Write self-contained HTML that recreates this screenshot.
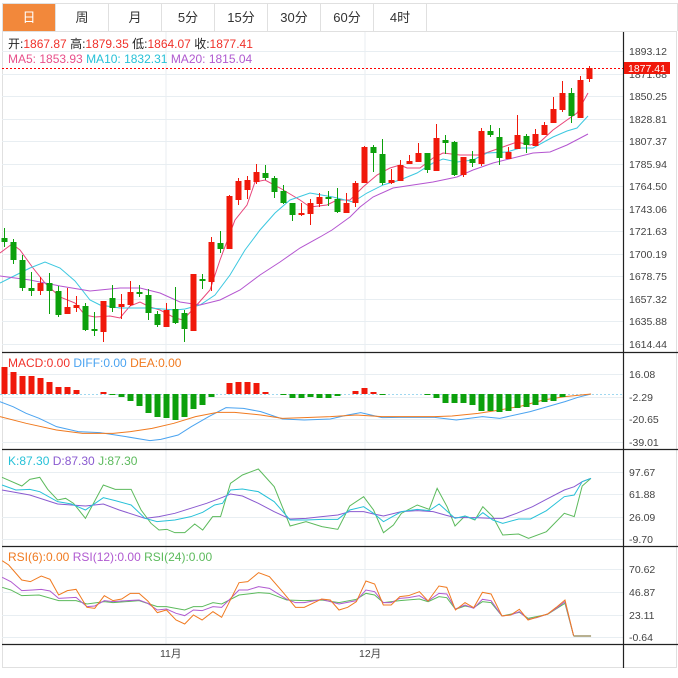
<!DOCTYPE html>
<html><head><meta charset="utf-8"><style>
html,body{margin:0;padding:0;background:#fff;width:678px;height:678px;overflow:hidden}
body{font-family:"Liberation Sans","Noto Sans CJK SC",sans-serif}
.tabs{position:absolute;left:2px;top:3px;height:27px;width:674px;border:1px solid #e0e0e0;border-bottom:none;display:flex}
.tab{width:52px;border-right:1px solid #e0e0e0;text-align:center;line-height:27px;font-size:13px;color:#333}
.tab.on{background:#f2883b;color:#fff}
svg{position:absolute;left:0;top:0}
</style></head><body>
<div class="tabs"><div class="tab on">日</div><div class="tab">周</div><div class="tab">月</div><div class="tab">5分</div><div class="tab">15分</div><div class="tab">30分</div><div class="tab">60分</div><div class="tab">4时</div></div>
<svg width="678" height="678" viewBox="0 0 678 678" font-family="Liberation Sans, Noto Sans CJK SC, sans-serif">
<rect x="2.5" y="31.5" width="674" height="636" fill="none" stroke="#e0e0e0"/>
<g stroke="#e8eef2" stroke-width="1">
<line x1="166" y1="32" x2="166" y2="644"/><line x1="365" y1="32" x2="365" y2="644"/>
<line x1="2" y1="51.5" x2="623" y2="51.5"/><line x1="2" y1="74.5" x2="623" y2="74.5"/><line x1="2" y1="96.5" x2="623" y2="96.5"/><line x1="2" y1="119.5" x2="623" y2="119.5"/><line x1="2" y1="141.5" x2="623" y2="141.5"/><line x1="2" y1="164.5" x2="623" y2="164.5"/><line x1="2" y1="186.5" x2="623" y2="186.5"/><line x1="2" y1="209.5" x2="623" y2="209.5"/><line x1="2" y1="231.5" x2="623" y2="231.5"/><line x1="2" y1="254.5" x2="623" y2="254.5"/><line x1="2" y1="276.5" x2="623" y2="276.5"/><line x1="2" y1="299.5" x2="623" y2="299.5"/><line x1="2" y1="321.5" x2="623" y2="321.5"/><line x1="2" y1="344.5" x2="623" y2="344.5"/>
<line x1="2" y1="374.5" x2="623" y2="374.5"/><line x1="2" y1="397.5" x2="623" y2="397.5"/><line x1="2" y1="419.5" x2="623" y2="419.5"/><line x1="2" y1="442.5" x2="623" y2="442.5"/>
<line x1="2" y1="472.5" x2="623" y2="472.5"/><line x1="2" y1="494.5" x2="623" y2="494.5"/><line x1="2" y1="517.5" x2="623" y2="517.5"/><line x1="2" y1="539.5" x2="623" y2="539.5"/>
<line x1="2" y1="569.5" x2="623" y2="569.5"/><line x1="2" y1="592.5" x2="623" y2="592.5"/><line x1="2" y1="615.5" x2="623" y2="615.5"/><line x1="2" y1="637.5" x2="623" y2="637.5"/>
</g>
<g stroke="#222" stroke-width="1.2">
<line x1="623.5" y1="32" x2="623.5" y2="668"/>
<line x1="2" y1="352.5" x2="678" y2="352.5"/><line x1="2" y1="449.5" x2="678" y2="449.5"/><line x1="2" y1="546.5" x2="678" y2="546.5"/><line x1="2" y1="644.5" x2="678" y2="644.5"/>
</g>
<g font-size="10.5" fill="#444">
<text x="629" y="55">1893.12</text><text x="629" y="78">1871.68</text><text x="629" y="100">1850.25</text><text x="629" y="123">1828.81</text><text x="629" y="145">1807.37</text><text x="629" y="168">1785.94</text><text x="629" y="190">1764.50</text><text x="629" y="213">1743.06</text><text x="629" y="235">1721.63</text><text x="629" y="258">1700.19</text><text x="629" y="280">1678.75</text><text x="629" y="303">1657.32</text><text x="629" y="325">1635.88</text><text x="629" y="348">1614.44</text>
<text x="629" y="378">16.08</text><text x="629" y="401">-2.29</text><text x="629" y="423">-20.65</text><text x="629" y="446">-39.01</text>
<text x="629" y="476">97.67</text><text x="629" y="498">61.88</text><text x="629" y="521">26.09</text><text x="629" y="543">-9.70</text>
<text x="629" y="573">70.62</text><text x="629" y="596">46.87</text><text x="629" y="619">23.11</text><text x="629" y="641">-0.64</text>
<text x="160" y="657">11月</text><text x="359" y="657">12月</text>
</g>
<line x1="2" y1="68.5" x2="623" y2="68.5" stroke="#f00" stroke-dasharray="2,2"/>
<rect x="624" y="62" width="46" height="12" fill="#f0180a"/><text x="628" y="72" font-size="10.5" fill="#fff">1877.41</text>
<g font-size="12">
<text x="8" y="48" fill="#222">开:<tspan fill="#f0312a">1867.87</tspan> 高:<tspan fill="#f0312a">1879.35</tspan> 低:<tspan fill="#f0312a">1864.07</tspan> 收:<tspan fill="#f0312a">1877.41</tspan></text>
<text x="8" y="63" fill="#e8508a">MA5: 1853.93 <tspan fill="#27c1d8">MA10: 1832.31</tspan> <tspan fill="#b05ad0">MA20: 1815.04</tspan></text>
<text x="8" y="367" fill="#f0312a">MACD:0.00 <tspan fill="#4aa3f0">DIFF:0.00</tspan> <tspan fill="#f07a20">DEA:0.00</tspan></text>
<text x="8" y="465" fill="#27c1d8">K:87.30 <tspan fill="#8a5ad0">D:87.30</tspan> <tspan fill="#5cba5c">J:87.30</tspan></text>
<text x="8" y="561" fill="#f07a20">RSI(6):0.00 <tspan fill="#b05ad0">RSI(12):0.00</tspan> <tspan fill="#5cba5c">RSI(24):0.00</tspan></text>
</g>
<g fill="none" stroke-width="1">
<polyline stroke="#e8457a" points="0,253 12,244 20,250 33,268 45,283 60,297 75,303 85,315 95,317 110,316 120,318 130,306 140,302 150,307 160,310 175,318 183,320 195,307 210,290 220,260 235,220 247,205 255,182 265,180 280,188 300,200 310,207 327,205 337,200 350,200 363,187 377,175 390,168 400,165 407,168 420,168 433,158 443,153 460,155 480,155 500,148 517,142 530,145 540,142 553,130 567,120 577,113 588,93"/>
<polyline stroke="#3cc8e0" points="0,283 10,278 30,268 45,262 60,268 75,281 90,300 100,305 120,308 150,308 175,310 185,309 200,305 215,295 230,275 245,250 260,230 275,213 290,200 310,193 333,197 353,202 367,193 383,185 400,180 417,173 433,163 443,159 457,162 473,160 487,153 507,152 520,148 533,148 553,137 567,131 577,128 588,116"/>
<polyline stroke="#b455d0" points="0,276 30,280 60,286 90,291 100,290 120,288 140,288 160,293 180,302 200,305 220,300 240,290 260,275 280,262 300,248 320,237 332,230 350,217 360,207 373,197 393,188 433,182 457,177 473,170 493,163 533,153 550,152 567,145 588,134"/>
</g>
<line x1="0" y1="394.5" x2="623" y2="394.5" stroke="#9fd8f0" stroke-dasharray="2,2"/>
<g fill="none" transform="translate(0,340) scale(0.4346,0.3333)">
<polyline vector-effect="non-scaling-stroke" stroke="#4aa3f0" points="0,185 30,200 60,220 90,235 130,260 180,275 230,278 290,290 345,302 370,298 410,285 440,260 480,230 520,203 560,205 600,215 650,237 700,240 760,237 800,225 830,218 880,233 920,232 1000,232 1050,240 1110,230 1150,235 1220,215 1260,200 1300,185 1330,172 1360,162"/>
<polyline vector-effect="non-scaling-stroke" stroke="#f07a20" points="0,230 60,250 130,270 190,280 260,280 300,275 350,265 400,250 450,230 500,217 540,217 600,225 650,235 700,233 760,230 820,225 880,230 1000,230 1040,228 1100,220 1150,210 1200,198 1250,180 1300,170 1360,162"/>
</g>
<g fill="none" transform="translate(0,450) scale(0.3974,0.3333)">
<polyline vector-effect="non-scaling-stroke" stroke="#5cba5c" points="5,82 55,108 75,88 100,82 120,118 145,150 165,145 185,160 215,205 260,105 290,118 330,118 355,180 380,220 400,240 420,238 440,248 465,248 490,222 510,240 535,200 555,200 580,100 610,75 650,57 690,110 730,228 770,215 810,230 850,238 880,168 915,140 940,180 965,248 990,225 1010,190 1050,165 1080,178 1100,115 1125,170 1145,228 1170,198 1195,210 1215,170 1240,200 1265,255 1305,252 1330,265 1375,245 1420,190 1445,200 1465,108 1487,85"/>
<polyline vector-effect="non-scaling-stroke" stroke="#8a5ad0" points="5,120 75,135 145,162 215,168 260,162 300,180 365,205 400,200 440,190 480,175 520,160 560,142 580,132 610,138 650,160 690,185 730,207 770,205 810,200 850,195 880,185 915,185 940,192 965,198 1010,185 1050,182 1090,185 1120,195 1145,203 1195,203 1240,205 1265,205 1300,190 1340,170 1375,148 1420,120 1445,110 1465,95 1487,85"/>
<polyline vector-effect="non-scaling-stroke" stroke="#27c1d8" points="5,105 40,120 75,118 100,125 145,155 180,162 215,180 260,143 290,152 330,165 365,205 395,215 440,210 480,200 510,187 540,165 560,160 580,120 610,117 650,125 690,155 730,210 770,210 810,208 850,208 880,180 915,170 940,190 965,215 1010,185 1050,178 1080,182 1105,162 1145,205 1170,198 1195,208 1215,188 1240,210 1265,220 1305,207 1335,207 1375,182 1420,140 1445,135 1465,95 1487,85"/>
</g>
<g fill="none" transform="translate(0,530) scale(0.4346,0.3333)">
<polyline vector-effect="non-scaling-stroke" stroke="#5cba5c" points="5,172 25,180 50,197 90,195 135,212 175,212 200,222 240,215 260,218 320,212 362,230 383,230 425,240 445,230 465,230 490,218 510,222 550,195 570,192 595,188 620,190 660,210 700,212 740,210 780,218 820,208 842,190 862,195 882,218 920,212 965,207 985,215 1010,200 1028,203 1048,238 1070,228 1090,233 1110,215 1130,218 1155,258 1195,247 1215,265 1260,253 1300,220 1320,318"/>
<polyline vector-effect="non-scaling-stroke" stroke="#b05ad0" points="5,142 25,155 50,182 75,180 95,178 115,183 135,205 175,202 200,230 218,228 240,212 260,215 280,213 320,210 340,220 362,240 383,237 405,250 425,257 445,240 465,242 490,230 510,232 550,180 570,180 595,170 620,175 660,208 680,218 700,218 740,208 780,222 820,212 842,180 862,185 882,218 900,218 920,205 940,203 965,197 985,213 1010,190 1028,192 1048,237 1070,225 1090,235 1110,208 1130,212 1155,258 1175,255 1195,245 1215,268 1235,263 1260,252 1280,235 1300,215 1320,318"/>
<polyline vector-effect="non-scaling-stroke" stroke="#f07a20" points="5,92 20,105 50,150 70,155 95,138 115,148 135,195 155,182 175,178 200,232 218,235 240,197 260,212 280,207 300,190 320,190 340,213 362,248 383,240 405,270 425,282 445,255 465,270 490,245 510,262 550,158 570,155 595,128 620,140 650,185 680,232 700,232 740,207 760,210 780,240 800,232 820,215 842,153 862,162 882,225 900,225 920,200 940,197 965,185 985,213 1010,168 1028,172 1048,240 1070,218 1090,233 1110,187 1130,192 1155,258 1175,255 1195,238 1215,270 1235,262 1260,252 1280,232 1300,210 1320,318"/>
<polyline vector-effect="non-scaling-stroke" stroke="#b8b090" stroke-width="2" points="1320,318 1360,318"/>
</g>
<g>
<g stroke-width="1">
<line x1="4.5" y1="228" x2="4.5" y2="247" stroke="#0ca00c"/><rect x="1.5" y="238" width="6" height="4" fill="#0ca00c"/>
<line x1="13.5" y1="239" x2="13.5" y2="264" stroke="#0ca00c"/><rect x="10.5" y="242" width="6" height="18" fill="#0ca00c"/>
<line x1="22.5" y1="255" x2="22.5" y2="291" stroke="#0ca00c"/><rect x="19.5" y="260" width="6" height="28" fill="#0ca00c"/>
<line x1="31.5" y1="272" x2="31.5" y2="296" stroke="#0ca00c"/><rect x="28.5" y="288" width="6" height="3" fill="#0ca00c"/>
<line x1="40.5" y1="277" x2="40.5" y2="295" stroke="#f0180a"/><rect x="37.5" y="283" width="6" height="8" fill="#f0180a"/>
<line x1="49.5" y1="273" x2="49.5" y2="314" stroke="#0ca00c"/><rect x="46.5" y="283" width="6" height="8" fill="#0ca00c"/>
<line x1="58.5" y1="286" x2="58.5" y2="317" stroke="#0ca00c"/><rect x="55.5" y="291" width="6" height="24" fill="#0ca00c"/>
<line x1="67.5" y1="288" x2="67.5" y2="314" stroke="#f0180a"/><rect x="64.5" y="307" width="6" height="7" fill="#f0180a"/>
<line x1="76.5" y1="296" x2="76.5" y2="312" stroke="#f0180a"/><rect x="73.5" y="305" width="6" height="3" fill="#f0180a"/>
<line x1="85.5" y1="303" x2="85.5" y2="331" stroke="#0ca00c"/><rect x="82.5" y="306" width="6" height="24" fill="#0ca00c"/>
<line x1="94.5" y1="312" x2="94.5" y2="336" stroke="#0ca00c"/><rect x="91.5" y="329" width="6" height="2" fill="#0ca00c"/>
<line x1="103.5" y1="301" x2="103.5" y2="342" stroke="#f0180a"/><rect x="100.5" y="301" width="6" height="31" fill="#f0180a"/>
<line x1="112.5" y1="285" x2="112.5" y2="312" stroke="#0ca00c"/><rect x="109.5" y="298" width="6" height="10" fill="#0ca00c"/>
<line x1="121.5" y1="294" x2="121.5" y2="319" stroke="#f0180a"/><rect x="118.5" y="304" width="6" height="3" fill="#f0180a"/>
<line x1="130.5" y1="281" x2="130.5" y2="306" stroke="#f0180a"/><rect x="127.5" y="292" width="6" height="13" fill="#f0180a"/>
<line x1="139.5" y1="285" x2="139.5" y2="297" stroke="#0ca00c"/><rect x="136.5" y="292" width="6" height="2" fill="#0ca00c"/>
<line x1="148.5" y1="289" x2="148.5" y2="320" stroke="#0ca00c"/><rect x="145.5" y="295" width="6" height="18" fill="#0ca00c"/>
<line x1="157.5" y1="311" x2="157.5" y2="327" stroke="#0ca00c"/><rect x="154.5" y="314" width="6" height="11" fill="#0ca00c"/>
<line x1="166.5" y1="303" x2="166.5" y2="327" stroke="#f0180a"/><rect x="163.5" y="310" width="6" height="17" fill="#f0180a"/>
<line x1="175.5" y1="287" x2="175.5" y2="324" stroke="#0ca00c"/><rect x="172.5" y="309" width="6" height="14" fill="#0ca00c"/>
<line x1="184.5" y1="310" x2="184.5" y2="342" stroke="#0ca00c"/><rect x="181.5" y="313" width="6" height="16" fill="#0ca00c"/>
<line x1="193.5" y1="274" x2="193.5" y2="331" stroke="#f0180a"/><rect x="190.5" y="274" width="6" height="57" fill="#f0180a"/>
<line x1="202.5" y1="274" x2="202.5" y2="289" stroke="#0ca00c"/><rect x="199.5" y="279" width="6" height="2" fill="#0ca00c"/>
<line x1="211.5" y1="237" x2="211.5" y2="291" stroke="#f0180a"/><rect x="208.5" y="242" width="6" height="40" fill="#f0180a"/>
<line x1="220.5" y1="231" x2="220.5" y2="253" stroke="#0ca00c"/><rect x="217.5" y="243" width="6" height="6" fill="#0ca00c"/>
<line x1="229.5" y1="195" x2="229.5" y2="249" stroke="#f0180a"/><rect x="226.5" y="196" width="6" height="53" fill="#f0180a"/>
<line x1="238.5" y1="178" x2="238.5" y2="205" stroke="#f0180a"/><rect x="235.5" y="181" width="6" height="19" fill="#f0180a"/>
<line x1="247.5" y1="176" x2="247.5" y2="199" stroke="#f0180a"/><rect x="244.5" y="180" width="6" height="10" fill="#f0180a"/>
<line x1="256.5" y1="164" x2="256.5" y2="184" stroke="#f0180a"/><rect x="253.5" y="172" width="6" height="10" fill="#f0180a"/>
<line x1="265.5" y1="165" x2="265.5" y2="180" stroke="#0ca00c"/><rect x="262.5" y="173" width="6" height="5" fill="#0ca00c"/>
<line x1="274.5" y1="176" x2="274.5" y2="198" stroke="#0ca00c"/><rect x="271.5" y="178" width="6" height="14" fill="#0ca00c"/>
<line x1="283.5" y1="185" x2="283.5" y2="204" stroke="#0ca00c"/><rect x="280.5" y="191" width="6" height="12" fill="#0ca00c"/>
<line x1="292.5" y1="203" x2="292.5" y2="221" stroke="#0ca00c"/><rect x="289.5" y="203" width="6" height="12" fill="#0ca00c"/>
<line x1="301.5" y1="203" x2="301.5" y2="216" stroke="#f0180a"/><rect x="298.5" y="213" width="6" height="2" fill="#f0180a"/>
<line x1="310.5" y1="199" x2="310.5" y2="225" stroke="#f0180a"/><rect x="307.5" y="203" width="6" height="11" fill="#f0180a"/>
<line x1="319.5" y1="193" x2="319.5" y2="207" stroke="#f0180a"/><rect x="316.5" y="197" width="6" height="7" fill="#f0180a"/>
<line x1="328.5" y1="191" x2="328.5" y2="206" stroke="#0ca00c"/><rect x="325.5" y="197" width="6" height="2" fill="#0ca00c"/>
<line x1="337.5" y1="188" x2="337.5" y2="213" stroke="#0ca00c"/><rect x="334.5" y="199" width="6" height="13" fill="#0ca00c"/>
<line x1="346.5" y1="193" x2="346.5" y2="213" stroke="#f0180a"/><rect x="343.5" y="203" width="6" height="10" fill="#f0180a"/>
<line x1="355.5" y1="181" x2="355.5" y2="207" stroke="#f0180a"/><rect x="352.5" y="183" width="6" height="20" fill="#f0180a"/>
<line x1="364.5" y1="146" x2="364.5" y2="183" stroke="#f0180a"/><rect x="361.5" y="147" width="6" height="36" fill="#f0180a"/>
<line x1="373.5" y1="145" x2="373.5" y2="172" stroke="#0ca00c"/><rect x="370.5" y="147" width="6" height="6" fill="#0ca00c"/>
<line x1="382.5" y1="139" x2="382.5" y2="185" stroke="#0ca00c"/><rect x="379.5" y="154" width="6" height="29" fill="#0ca00c"/>
<line x1="391.5" y1="169" x2="391.5" y2="184" stroke="#f0180a"/><rect x="388.5" y="180" width="6" height="3" fill="#f0180a"/>
<line x1="400.5" y1="160" x2="400.5" y2="181" stroke="#f0180a"/><rect x="397.5" y="165" width="6" height="16" fill="#f0180a"/>
<line x1="409.5" y1="155" x2="409.5" y2="164" stroke="#f0180a"/><rect x="406.5" y="161" width="6" height="3" fill="#f0180a"/>
<line x1="418.5" y1="143" x2="418.5" y2="162" stroke="#f0180a"/><rect x="415.5" y="153" width="6" height="9" fill="#f0180a"/>
<line x1="427.5" y1="153" x2="427.5" y2="173" stroke="#0ca00c"/><rect x="424.5" y="153" width="6" height="17" fill="#0ca00c"/>
<line x1="436.5" y1="124" x2="436.5" y2="171" stroke="#f0180a"/><rect x="433.5" y="138" width="6" height="33" fill="#f0180a"/>
<line x1="445.5" y1="135" x2="445.5" y2="154" stroke="#0ca00c"/><rect x="442.5" y="140" width="6" height="3" fill="#0ca00c"/>
<line x1="454.5" y1="141" x2="454.5" y2="176" stroke="#0ca00c"/><rect x="451.5" y="142" width="6" height="33" fill="#0ca00c"/>
<line x1="463.5" y1="157" x2="463.5" y2="177" stroke="#f0180a"/><rect x="460.5" y="157" width="6" height="18" fill="#f0180a"/>
<line x1="472.5" y1="151" x2="472.5" y2="167" stroke="#0ca00c"/><rect x="469.5" y="159" width="6" height="4" fill="#0ca00c"/>
<line x1="481.5" y1="128" x2="481.5" y2="166" stroke="#f0180a"/><rect x="478.5" y="131" width="6" height="33" fill="#f0180a"/>
<line x1="490.5" y1="125" x2="490.5" y2="137" stroke="#0ca00c"/><rect x="487.5" y="131" width="6" height="4" fill="#0ca00c"/>
<line x1="499.5" y1="128" x2="499.5" y2="165" stroke="#0ca00c"/><rect x="496.5" y="137" width="6" height="21" fill="#0ca00c"/>
<line x1="508.5" y1="147" x2="508.5" y2="159" stroke="#f0180a"/><rect x="505.5" y="152" width="6" height="7" fill="#f0180a"/>
<line x1="517.5" y1="115" x2="517.5" y2="149" stroke="#f0180a"/><rect x="514.5" y="135" width="6" height="14" fill="#f0180a"/>
<line x1="526.5" y1="134" x2="526.5" y2="153" stroke="#0ca00c"/><rect x="523.5" y="136" width="6" height="9" fill="#0ca00c"/>
<line x1="535.5" y1="129" x2="535.5" y2="146" stroke="#f0180a"/><rect x="532.5" y="134" width="6" height="12" fill="#f0180a"/>
<line x1="544.5" y1="122" x2="544.5" y2="135" stroke="#f0180a"/><rect x="541.5" y="125" width="6" height="10" fill="#f0180a"/>
<line x1="553.5" y1="97" x2="553.5" y2="123" stroke="#f0180a"/><rect x="550.5" y="109" width="6" height="14" fill="#f0180a"/>
<line x1="562.5" y1="81" x2="562.5" y2="112" stroke="#f0180a"/><rect x="559.5" y="93" width="6" height="17" fill="#f0180a"/>
<line x1="571.5" y1="88" x2="571.5" y2="123" stroke="#0ca00c"/><rect x="568.5" y="93" width="6" height="23" fill="#0ca00c"/>
<line x1="580.5" y1="76" x2="580.5" y2="118" stroke="#f0180a"/><rect x="577.5" y="80" width="6" height="38" fill="#f0180a"/>
<line x1="589.5" y1="66" x2="589.5" y2="82" stroke="#f0180a"/><rect x="586.5" y="68" width="6" height="11" fill="#f0180a"/>
</g>
<g>
<rect x="1.5" y="367" width="6" height="27" fill="#f0180a"/><rect x="10.5" y="372" width="6" height="22" fill="#f0180a"/><rect x="19.5" y="376" width="6" height="18" fill="#f0180a"/><rect x="28.5" y="376" width="6" height="18" fill="#f0180a"/><rect x="37.5" y="378" width="6" height="16" fill="#f0180a"/><rect x="46.5" y="382" width="6" height="12" fill="#f0180a"/><rect x="55.5" y="387" width="6" height="7" fill="#f0180a"/><rect x="64.5" y="387" width="6" height="7" fill="#f0180a"/><rect x="73.5" y="390" width="6" height="4" fill="#f0180a"/><rect x="100.5" y="392" width="6" height="2" fill="#f0180a"/>
<rect x="109.5" y="394" width="6" height="1" fill="#0ca00c"/><rect x="118.5" y="394" width="6" height="3" fill="#0ca00c"/><rect x="127.5" y="394" width="6" height="7" fill="#0ca00c"/><rect x="136.5" y="394" width="6" height="12" fill="#0ca00c"/><rect x="145.5" y="394" width="6" height="19" fill="#0ca00c"/><rect x="154.5" y="394" width="6" height="23" fill="#0ca00c"/><rect x="163.5" y="394" width="6" height="24" fill="#0ca00c"/><rect x="172.5" y="394" width="6" height="26" fill="#0ca00c"/><rect x="181.5" y="394" width="6" height="23" fill="#0ca00c"/><rect x="190.5" y="394" width="6" height="15" fill="#0ca00c"/><rect x="199.5" y="394" width="6" height="11" fill="#0ca00c"/><rect x="208.5" y="394" width="6" height="3" fill="#0ca00c"/>
<rect x="226.5" y="383" width="6" height="11" fill="#f0180a"/><rect x="235.5" y="382" width="6" height="12" fill="#f0180a"/><rect x="244.5" y="382" width="6" height="12" fill="#f0180a"/><rect x="253.5" y="383" width="6" height="11" fill="#f0180a"/><rect x="262.5" y="392" width="6" height="2" fill="#f0180a"/>
<rect x="280.5" y="394" width="6" height="1" fill="#0ca00c"/><rect x="289.5" y="394" width="6" height="4" fill="#0ca00c"/><rect x="298.5" y="394" width="6" height="4" fill="#0ca00c"/><rect x="307.5" y="394" width="6" height="3" fill="#0ca00c"/><rect x="316.5" y="394" width="6" height="4" fill="#0ca00c"/><rect x="325.5" y="394" width="6" height="4" fill="#0ca00c"/><rect x="334.5" y="394" width="6" height="2" fill="#0ca00c"/>
<rect x="352.5" y="391" width="6" height="3" fill="#f0180a"/><rect x="361.5" y="388" width="6" height="6" fill="#f0180a"/><rect x="370.5" y="392" width="6" height="2" fill="#f0180a"/>
<rect x="379.5" y="394" width="6" height="1" fill="#0ca00c"/><rect x="424.5" y="394" width="6" height="1" fill="#0ca00c"/><rect x="433.5" y="394" width="6" height="4" fill="#0ca00c"/><rect x="442.5" y="394" width="6" height="9" fill="#0ca00c"/><rect x="451.5" y="394" width="6" height="9" fill="#0ca00c"/><rect x="460.5" y="394" width="6" height="9" fill="#0ca00c"/><rect x="469.5" y="394" width="6" height="11" fill="#0ca00c"/><rect x="478.5" y="394" width="6" height="17" fill="#0ca00c"/><rect x="487.5" y="394" width="6" height="17" fill="#0ca00c"/><rect x="496.5" y="394" width="6" height="18" fill="#0ca00c"/><rect x="505.5" y="394" width="6" height="17" fill="#0ca00c"/><rect x="514.5" y="394" width="6" height="14" fill="#0ca00c"/><rect x="523.5" y="394" width="6" height="13" fill="#0ca00c"/><rect x="532.5" y="394" width="6" height="11" fill="#0ca00c"/><rect x="541.5" y="394" width="6" height="8" fill="#0ca00c"/><rect x="550.5" y="394" width="6" height="7" fill="#0ca00c"/><rect x="559.5" y="394" width="6" height="3" fill="#0ca00c"/>
</g>
</g>
</svg>
</body></html>
